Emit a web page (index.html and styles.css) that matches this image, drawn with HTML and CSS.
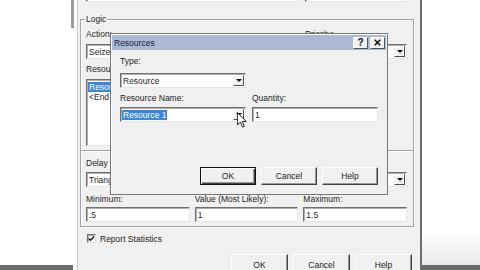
FILE: index.html
```html
<!DOCTYPE html>
<html lang="en">
<head>
  <meta charset="UTF-8">
  <meta name="viewport" content="width=device-width, initial-scale=1.0">
  <title>Process - Resources</title>
  <link rel="stylesheet" href="styles.css">
</head>
<body>
  <div class="desk">
    <!-- bits of the windows behind -->
    <div class="scroll-stub"></div>
    <div class="task-left"></div>
    <div class="task-right"></div>

    <!-- Process dialog -->
    <div class="win process">
      <div class="two-col top-row">
        <div class="combo"><span class="val"></span><span class="drop"></span></div>
        <div class="combo"><span class="val"></span><span class="drop"></span></div>
      </div>

      <div class="group">
        <span class="group-title">Logic</span>
        <div class="two-col labels mt5">
          <span>Action:</span><span>Priority:</span>
        </div>
        <div class="two-col mt5">
          <div class="combo"><span class="val">Seize Delay Release</span><span class="drop"></span></div>
          <div class="combo"><span class="val">Medium(2)</span><span class="drop"></span></div>
        </div>
        <div class="labels mt5">Resources:</div>
        <div class="listbox mt5">
          <div class="item sel">Resource, Resource 1, 1</div>
          <div class="item">&lt;End of list&gt;</div>
        </div>
        <div class="sep"></div>
        <div class="two-col labels mt6">
          <span>Delay Type:</span><span>Units:</span>
        </div>
        <div class="two-col mt4">
          <div class="combo"><span class="val">Triangular</span><span class="drop"></span></div>
          <div class="combo"><span class="val">Hours</span><span class="drop"></span></div>
        </div>
        <div class="three-col labels mt7">
          <span>Minimum:</span><span>Value (Most Likely):</span><span>Maximum:</span>
        </div>
        <div class="three-col mt3">
          <div class="field">.5</div>
          <div class="field">1</div>
          <div class="field">1.5</div>
        </div>
      </div>

      <div class="check-row">
        <span class="check">
          <svg width="7" height="7" viewBox="0 0 7 7"><path d="M0.8 3.4 L2.7 5.3 L6.2 1.4" fill="none" stroke="#111" stroke-width="1.4"/></svg>
        </span>
        Report Statistics
      </div>

      <div class="btn-row main-btns">
        <button class="btn">OK</button>
        <button class="btn">Cancel</button>
        <button class="btn">Help</button>
      </div>
    </div>

    <!-- Resources dialog -->
    <div class="win dialog">
      <div class="titlebar">
        <span class="title">Resources</span>
        <span class="tb">?</span>
        <span class="tb">
          <svg width="7" height="7" viewBox="0 0 7 7"><path d="M0.7 0.7 L6.3 6.3 M6.3 0.7 L0.7 6.3" stroke="#111" stroke-width="1.6"/></svg>
        </span>
      </div>
      <div class="dlg-body">
        <div class="labels">Type:</div>
        <div class="pair mt7">
          <div class="combo"><span class="val">Resource</span><span class="drop"></span></div>
        </div>
        <div class="pair labels mt5">
          <span>Resource Name:</span><span>Quantity:</span>
        </div>
        <div class="pair mt4">
          <div class="combo"><span class="val"><span class="hl">Resource 1</span></span><span class="drop"></span></div>
          <div class="field">1</div>
        </div>
        <div class="btn-row dlg-btns">
          <button class="btn small default">OK</button>
          <button class="btn small">Cancel</button>
          <button class="btn small">Help</button>
        </div>
      </div>
    </div>

    <!-- mouse pointer -->
    <svg class="cursor" width="10" height="16" viewBox="0 0 12 19">
      <path d="M0.5 0.5 L0.5 15.5 L4 12 L6.6 18 L8.8 17 L6.3 11.2 L11 11.2 Z" fill="#fff" stroke="#000" stroke-width="1"/>
    </svg>
  </div>
</body>
</html>
```

FILE: styles.css
```css
/* Global */
* {
  margin: 0;
  padding: 0;
  box-sizing: border-box;
}

body {
  width: 480px;
  height: 270px;
  overflow: hidden;
  background: #fff;
  font-family: "Liberation Sans", Arial, sans-serif;
  font-size: 8.5px;
  line-height: 10px;
  color: #1e1e1e;
}

.desk {
  position: relative;
  width: 480px;
  height: 270px;
  overflow: hidden;
}

/* Windows behind the dialog */
.scroll-stub {
  position: absolute;
  left: 71px;
  top: 0;
  width: 3px;
  height: 28px;
  background: #9c9c9c;
}

.task-left {
  position: absolute;
  left: 0;
  bottom: 0;
  width: 73px;
  height: 5px;
  background: #6b6b6b;
}

.task-right {
  position: absolute;
  left: 422px;
  right: 0;
  bottom: 0;
  height: 40px;
  background: linear-gradient(#fff 0, #eaeaea 35px, #6b6b6b 35px);
}

/* Window frames */
.win {
  position: absolute;
  background: #f0f0f0;
}

.process {
  left: 77px;
  top: -22px;
  width: 345px;
  height: 300px;
  border-left: 1px solid #cfcfcf;
  border-right: 2px solid #6e6e6e;
  padding-top: 9px;
}

.dialog {
  left: 110px;
  top: 33px;
  width: 278px;
  height: 162px;
  border: 1px solid #777;
  padding: 1px;
  box-shadow: inset 1px 1px 0 #fff;
}

/* Spacing helpers */
.mt3 { margin-top: 3px; }
.mt4 { margin-top: 4px; }
.mt5 { margin-top: 5px; }
.mt6 { margin-top: 6px; }
.mt7 { margin-top: 7px; }

/* Rows */
.two-col {
  display: grid;
  grid-template-columns: 1fr 102px;
  column-gap: 10px;
}

.three-col {
  display: grid;
  grid-template-columns: 1fr 1fr 1fr;
  column-gap: 5px;
}

.pair {
  display: grid;
  grid-template-columns: 1fr 1fr;
  column-gap: 6px;
}

.labels {
  height: 10px;
  white-space: nowrap;
}

.top-row {
  column-gap: 8px;
  padding: 0 13px 0 8px;
}

/* Group box */
.group {
  margin: 17px 6px 0 2px;
  border: 1px solid #a3a3a3;
  padding: 0 6px 4px 5px;
  box-shadow: 1px 1px 0 #fff, inset 1px 1px 0 #fff;
}

.group-title {
  display: table;
  margin: -6px 0 0 -1px;
  padding: 0 1px;
  background: #f0f0f0;
}

.sep {
  height: 2px;
  margin: 4px -6px 0 -5px;
  border-top: 1px solid #a3a3a3;
  border-bottom: 1px solid #fff;
}

/* Inputs */
.combo,
.field,
.listbox,
.check {
  background: #fff;
  border: 1px solid;
  border-color: #6f6f6f #e6e6e6 #e6e6e6 #6f6f6f;
  box-shadow: inset 1px 1px 0 #b0b0b0;
}

.combo {
  height: 15px;
  display: flex;
}

.combo .val {
  flex: 1;
  padding: 2px 2px 0;
  white-space: nowrap;
  overflow: hidden;
}

.field {
  height: 15px;
  padding: 2px 2px 0;
}

.drop {
  width: 11px;
  margin: 1px;
  background: #f0f0f0;
  border: 1px solid;
  border-color: #fff #4f4f4f #4f4f4f #fff;
  display: flex;
  align-items: center;
  justify-content: center;
}

.drop::after {
  content: "";
  border-left: 3px solid transparent;
  border-right: 3px solid transparent;
  border-top: 3px solid #111;
}

.hl {
  margin-left: -1px;
  padding: 0 1px;
  background: #3b86d9;
  color: #fff;
}

.listbox {
  width: 215px;
  height: 67px;
  padding: 2px 1px;
}

.item {
  height: 10px;
  padding-left: 1px;
  white-space: nowrap;
}

.item.sel {
  background: #3b86d9;
  color: #fff;
}

.check-row {
  display: flex;
  align-items: center;
  gap: 4px;
  margin: 7px 0 0 9px;
  height: 9px;
}

.check {
  width: 9px;
  height: 9px;
  display: flex;
  align-items: center;
  justify-content: center;
}

/* Buttons */
.btn-row {
  display: flex;
  justify-content: flex-end;
  gap: 5px;
}

.main-btns {
  margin-top: 11px;
  padding-right: 8px;
}

.dlg-btns {
  margin-top: 45px;
}

.btn {
  width: 57px;
  height: 22px;
  font: inherit;
  color: #1e1e1e;
  background: #f0f0f0;
  border: 1px solid;
  border-color: #fff #404040 #404040 #fff;
  box-shadow: inset -1px -1px 0 #9a9a9a;
}

.btn.small {
  width: 56px;
  height: 18px;
}

.btn.default {
  border-color: #111;
  box-shadow: inset 1px 1px 0 #fff, inset -1px -1px 0 #404040, inset -2px -2px 0 #9a9a9a;
}

/* Title bar */
.titlebar {
  height: 15px;
  display: flex;
  align-items: center;
  gap: 2px;
  padding: 0 1px 0 2px;
  background: #abbad2;
}

.title {
  flex: 1;
  color: #14203a;
}

.tb {
  width: 15px;
  height: 12px;
  display: flex;
  align-items: center;
  justify-content: center;
  background: #f2f2f2;
  border: 1px solid;
  border-color: #fff #555 #555 #fff;
  font-size: 10px;
  font-weight: bold;
  color: #111;
}

.dlg-body {
  padding: 6px 8px 0;
}

/* Pointer over the drop button */
.cursor {
  position: absolute;
  left: 237px;
  top: 112px;
}
```
